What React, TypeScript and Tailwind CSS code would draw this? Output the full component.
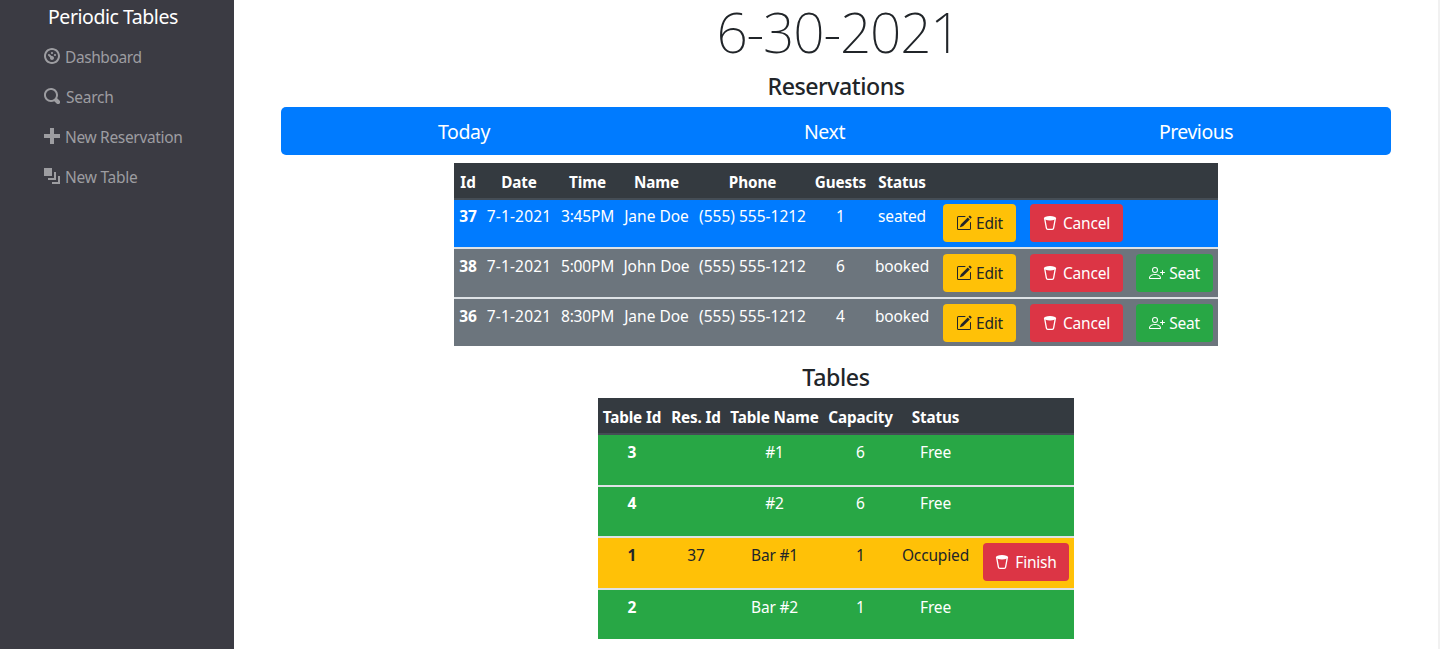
import type { ReactNode } from 'react';
import { BsPencilSquare, BsPersonPlus } from 'react-icons/bs';

const navItems = [
  {
    label: 'Dashboard',
    gap: 'ml-[5px]',
    width: 'tracking-[-0.41px]',
    path: 'M4 0c-2.2 0-4 1.8-4 4s1.8 4 4 4 4-1.8 4-4-1.8-4-4-4zm0 1c1.66 0 3 1.34 3 3s-1.34 3-3 3-3-1.34-3-3 1.34-3 3-3zm0 1c-.28 0-.5.22-.5.5s.22.5.5.5.5-.22.5-.5-.22-.5-.5-.5zm-1.66 1a.5.5 0 0 0-.19.84l.91.91c-.02.08-.06.16-.06.25 0 .55.45 1 1 1s1-.45 1-1-.45-1-1-1c-.09 0-.17.04-.25.06l-.91-.91a.5.5 0 0 0-.44-.16.5.5 0 0 0-.06 0zm3.16 0c-.28 0-.5.22-.5.5s.22.5.5.5.5-.22.5-.5-.22-.5-.5-.5z',
  },
  {
    label: 'Search',
    gap: 'ml-[6px]',
    width: 'tracking-[-0.25px]',
    path: 'M3.5 0c-1.93 0-3.5 1.57-3.5 3.5s1.57 3.5 3.5 3.5c.59 0 1.17-.14 1.66-.41a1 1 0 0 0 .13.13l1 1a1.02 1.02 0 1 0 1.44-1.44l-1-1a1 1 0 0 0-.16-.13c.27-.49.44-1.06.44-1.66 0-1.93-1.55-3.5-3.5-3.5zm0 1c1.39 0 2.5 1.11 2.5 2.5 0 .66-.24 1.27-.66 1.72-.01.01-.02.02-.03.03a1 1 0 0 0-.13.13c-.44.4-1.04.63-1.69.63-1.39 0-2.5-1.11-2.5-2.5s1.11-2.5 2.5-2.5z',
  },
  {
    label: 'New Reservation',
    gap: 'ml-[5px]',
    width: 'tracking-[-0.33px]',
    path: 'M3 0v3h-3v2h3v3h2v-3h3v-2h-3v-3h-2z',
  },
  {
    label: 'New Table',
    gap: 'ml-[5px]',
    width: 'tracking-[-0.25px]',
    path: 'M0 0v4h4v-4h-4zm5 2v3h-3v1h4v-4h-1zm2 2v3h-3v1h4v-4h-1z',
  },
];

const reservations = [
  { id: 37, time: '3:45PM', name: 'Jane Doe', guests: 1, status: 'seated' },
  { id: 38, time: '5:00PM', name: 'John Doe', guests: 6, status: 'booked' },
  { id: 36, time: '8:30PM', name: 'Jane Doe', guests: 4, status: 'booked' },
];

const tables = [
  { id: 3, res: '', name: '#1', capacity: 6, status: 'Free', height: 'h-[50px] [&>td]:pt-[5px]' },
  { id: 4, res: '', name: '#2', capacity: 6, status: 'Free', height: 'h-[51px] [&>td]:pt-[4px]' },
  { id: 1, res: '37', name: 'Bar #1', capacity: 1, status: 'Occupied', height: 'h-[52px] [&>td]:pt-[5px]' },
  { id: 2, res: '', name: 'Bar #2', capacity: 1, status: 'Free', height: 'h-[51px] [&>td]:pt-[5px]' },
];

function BinIcon() {
  return (
    <svg viewBox="0 0 16 16" className="-ml-px mr-px size-4 shrink-0">
      <path d="M2.6 3.2 4.4 13.1a1.4 1.4 0 0 0 1.4 1.2h4.4a1.4 1.4 0 0 0 1.4-1.2L13.4 3.2" fill="none" stroke="currentColor" strokeWidth="1.3" />
      <ellipse cx="8" cy="3.2" rx="6.2" ry="2.2" fill="currentColor" />
    </svg>
  );
}

function Button({ color, width, children }: { color: string; width: string; children: ReactNode }) {
  return (
    <button className={`flex h-[38px] items-center justify-center gap-[4px] rounded-[4px] tracking-[-0.2px] ${width} ${color}`}>
      {children}
    </button>
  );
}

const red = 'bg-[#dc3545] text-white';
const th = 'p-0 pt-[2px] font-bold text-[15.25px] tracking-[-0.12px]';

export default function App() {
  return (
    <div className="flex h-[649px] overflow-hidden bg-white font-['Noto_Sans',sans-serif] text-[15.5px] leading-6 text-[#212529]">
      <aside className="w-[234px] shrink-0 bg-[#3b3b43]">
        <div className="pt-[2px] pl-[48px] text-[19.5px] leading-[30px] tracking-[-0.46px] text-white">Periodic Tables</div>
        <nav className="mt-[5px]">
          {navItems.map((item) => (
            <a key={item.label} className="flex h-10 items-center pl-[44px] text-[#9d9da1]">
              <svg viewBox="0 0 8 8" className="mb-[2px] size-4 shrink-0 fill-current">
                <path d={item.path} />
              </svg>
              <span className={`${item.gap} ${item.width}`}>{item.label}</span>
            </a>
          ))}
        </nav>
      </aside>

      <main className="flex grow flex-col items-center border-r-2 border-[#f1f1f1]">
        <h1 className="h-[71px] pl-[5px] text-[55px] font-[200] leading-[63px] tracking-[-1.2px]">6-30-2021</h1>
        <h2 className="text-[23.2px] font-medium leading-[30px] tracking-[-0.5px]">Reservations</h2>
        <div className="mt-[6px] flex h-[48px] w-[1110px] items-center rounded-[5px] bg-[#007bff] pt-[2px] text-[19.5px] text-white">
          <span className="w-[366px] text-center tracking-[-0.4px]">Today</span>
          <span className="w-[355px] text-center tracking-[-0.4px]">Next</span>
          <span className="w-[388px] text-center tracking-[-0.5px]">Previous</span>
        </div>

        <table className="mt-[8px] w-[764px] table-fixed border-separate border-spacing-0 text-center whitespace-nowrap">
          <colgroup>
            <col className="w-[28px]" />
            <col className="w-[74px]" />
            <col className="w-[63px]" />
            <col className="w-[75px]" />
            <col className="w-[117px]" />
            <col className="w-[59px]" />
            <col className="w-[64px]" />
            <col className="w-[91px]" />
            <col className="w-[103px]" />
            <col className="w-[90px]" />
          </colgroup>
          <thead>
            <tr className="h-[37px] bg-[#343a40] text-white [&>th]:border-b-2 [&>th]:border-[#454d55]">
              {['Id', 'Date', 'Time', 'Name', 'Phone', 'Guests', 'Status', '', '', ''].map((h, i) => (
                <th key={i} className={th}>{h}</th>
              ))}
            </tr>
          </thead>
          <tbody>
            {reservations.map((r, i) => (
              <tr
                key={r.id}
                className={`text-white [&>td]:align-top ${
                  i === 0
                    ? 'h-[47px] bg-[#007bff] [&>td]:pt-[4px]'
                    : i === 1
                      ? 'h-[50px] bg-[#6c757d] [&>td]:border-t-2 [&>td]:border-[#dee2e6] [&>td]:pt-[5px]'
                      : 'h-[49px] bg-[#6c757d] [&>td]:border-t-2 [&>td]:border-[#dee2e6] [&>td]:pt-[5px]'
                }`}
              >
                <td className="font-bold">{r.id}</td>
                <td className="tracking-[0.15px]">7-1-2021</td>
                <td className="tracking-[-0.2px]">{r.time}</td>
                <td>{r.name}</td>
                <td>(555) 555-1212</td>
                <td>{r.guests}</td>
                <td className="tracking-[-0.1px]">{r.status}</td>
                <td>
                  <div className="flex justify-center">
                    <Button color="bg-[#ffc107] text-[#212529]" width="w-[73px]">
                      <BsPencilSquare size={16} />
                      Edit
                    </Button>
                  </div>
                </td>
                <td>
                  <div className="flex justify-center">
                    <Button color={red} width="w-[93px]">
                      <BinIcon />
                      Cancel
                    </Button>
                  </div>
                </td>
                <td>
                  {r.status === 'booked' && (
                    <div className="flex justify-end pr-[5px]">
                      <Button color="bg-[#28a745] text-white" width="w-[77px]">
                        <BsPersonPlus size={16} />
                        Seat
                      </Button>
                    </div>
                  )}
                </td>
              </tr>
            ))}
          </tbody>
        </table>

        <h2 className="mt-[16px] text-[23.2px] font-medium leading-[30px] tracking-[-0.4px]">Tables</h2>
        <table className="mt-[6px] w-[476px] table-fixed border-separate border-spacing-0 text-center whitespace-nowrap">
          <colgroup>
            <col className="w-[68px]" />
            <col className="w-[60px]" />
            <col className="w-[97px]" />
            <col className="w-[75px]" />
            <col className="w-[75px]" />
            <col className="w-[101px]" />
          </colgroup>
          <thead>
            <tr className="h-[37px] bg-[#343a40] text-white [&>th]:border-b-2 [&>th]:border-[#454d55]">
              {['Table Id', 'Res. Id', 'Table Name', 'Capacity', 'Status', ''].map((h, i) => (
                <th key={i} className={th}>{h}</th>
              ))}
            </tr>
          </thead>
          <tbody>
            {tables.map((t, i) => (
              <tr
                key={t.id}
                className={`[&>td]:align-top ${t.height} ${
                  t.res ? 'bg-[#ffc107] text-[#212529]' : 'bg-[#28a745] text-white'
                } ${i > 0 ? '[&>td]:border-t-2 [&>td]:border-[#dee2e6]' : ''}`}
              >
                <td className="font-bold">{t.id}</td>
                <td>{t.res}</td>
                <td className="tracking-[-0.2px]">{t.name}</td>
                <td>{t.capacity}</td>
                <td className="tracking-[-0.15px]">{t.status}</td>
                <td>
                  {t.res && (
                    <div className="flex justify-end pr-[5px]">
                      <Button color={red} width="w-[86px]">
                        <BinIcon />
                        Finish
                      </Button>
                    </div>
                  )}
                </td>
              </tr>
            ))}
          </tbody>
        </table>
      </main>
    </div>
  );
}
